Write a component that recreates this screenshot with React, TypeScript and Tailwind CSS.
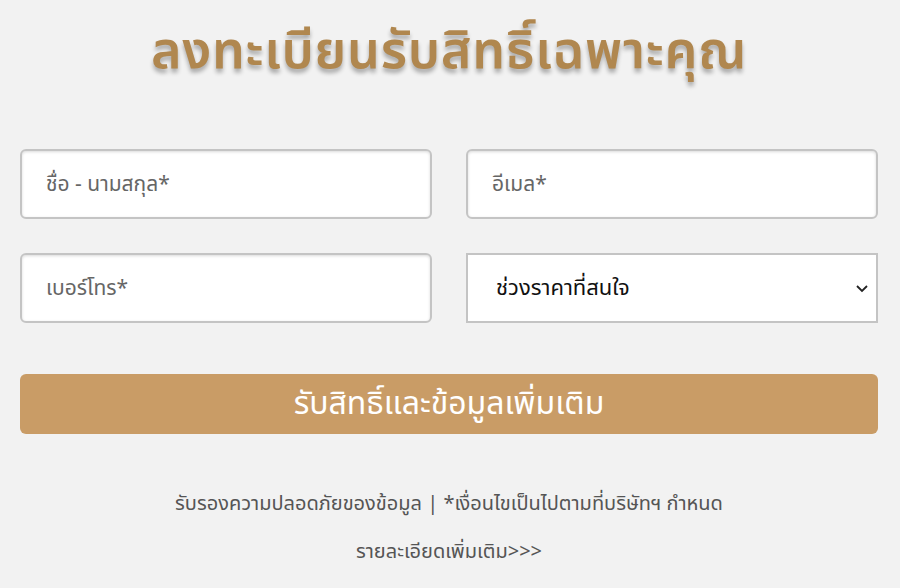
import React from "react";

const thai = "font-['Noto_Sans_Thai','Noto_Sans','Liberation_Sans',sans-serif]";

export default function App() {
  const [price, setPrice] = React.useState("");

  return (
    <div className={`min-h-[588px] w-full bg-[#f2f2f2] ${thai}`}>
      <div className="flex flex-col pl-5 pr-[22px] pt-[14px]">
        <h1 className="text-center text-[52px] font-semibold leading-[76px] tracking-[0.7px] text-[#b0874f] [text-shadow:0_4px_4px_rgba(0,0,0,0.3)]">
          ลงทะเบียนรับสิทธิ์เฉพาะคุณ
        </h1>

        <div className="mt-[59px] grid grid-cols-2 gap-x-[34px] gap-y-[34px]">
          <input
            placeholder="ชื่อ - นามสกุล*"
            className="h-[70px] rounded-md border-2 border-[#c4c4c4] bg-white px-6 text-[21px] text-[#333] shadow-[inset_0_1px_3px_rgba(0,0,0,0.15)] outline-none placeholder:text-[#666]"
          />
          <input
            placeholder="อีเมล*"
            className="h-[70px] rounded-md border-2 border-[#c4c4c4] bg-white px-6 text-[21px] text-[#333] shadow-[inset_0_1px_3px_rgba(0,0,0,0.15)] outline-none placeholder:text-[#666]"
          />
          <input
            placeholder="เบอร์โทร*"
            className="h-[70px] rounded-md border-2 border-[#c4c4c4] bg-white px-6 text-[21px] text-[#333] shadow-[inset_0_1px_3px_rgba(0,0,0,0.15)] outline-none placeholder:text-[#666]"
          />
          <div className="relative h-[70px]">
            <select
              value={price}
              onChange={(e) => setPrice(e.target.value)}
              className="h-full w-full appearance-none border-2 border-[#c4c4c4] bg-white pl-7 pr-10 text-[22px] text-[#111] outline-none"
            >
              <option value="">ช่วงราคาที่สนใจ</option>
              <option value="1">ต่ำกว่า 3 ล้าน</option>
              <option value="2">3 - 5 ล้าน</option>
              <option value="3">มากกว่า 5 ล้าน</option>
            </select>
            <svg
              className="pointer-events-none absolute right-[8px] top-1/2 h-4 w-4 -translate-y-1/2 text-[#222]"
              viewBox="0 0 16 16"
              fill="none"
              stroke="currentColor"
              strokeWidth="1.8"
            >
              <path d="M3 6l5 5 5-5" />
            </svg>
          </div>
        </div>

        <button className="mt-[51px] h-[60px] w-full rounded-md bg-[#c99c66] text-[32px] text-white">
          รับสิทธิ์และข้อมูลเพิ่มเติม
        </button>

        <p className="mt-[55px] text-center text-[20px] text-[#555]">
          รับรองความปลอดภัยของข้อมูล | *เงื่อนไขเป็นไปตามที่บริษัทฯ กำหนด
        </p>
        <a href="#" className="mt-[18px] text-center text-[20px] text-[#555]">
          รายละเอียดเพิ่มเติม&gt;&gt;&gt;
        </a>
      </div>
    </div>
  );
}
